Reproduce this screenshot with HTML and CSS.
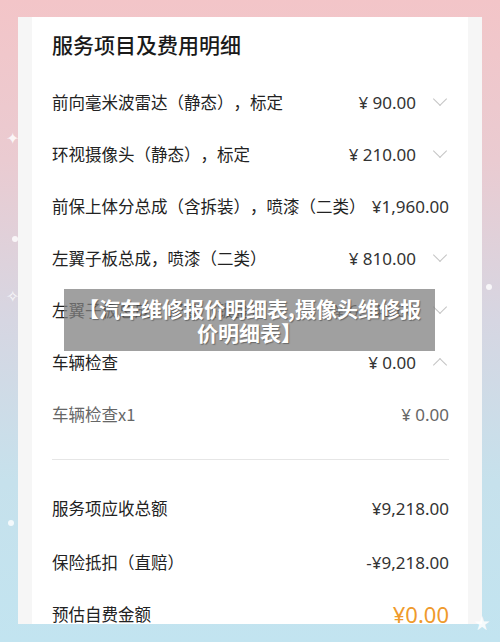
FILE: index.html
```html
<!DOCTYPE html>
<html lang="zh">
<head>
    <meta charset="UTF-8">
    <meta name="viewport" content="width=device-width, initial-scale=1.0">
    <title>服务项目及费用明细</title>
    <link rel="stylesheet" href="styles.css">
</head>
<body>
    <span class="dot" style="left:12px;top:236px"></span>
    <span class="dot" style="left:8px;top:520px"></span>
    <span class="dot" style="left:486px;top:284px"></span>
    <span class="star" style="left:6px;top:130px">✦</span>
    <span class="star" style="left:474px;top:615px">★</span>
    <span class="star" style="left:6px;top:288px">✧</span>

    <div class="frame">
        <div class="card">
            <div class="title">服务项目及费用明细</div>

            <div class="row">
                <span class="label">前向毫米波雷达（静态），标定</span>
                <span class="price">¥ 90.00<i class="chev"></i></span>
            </div>
            <div class="row">
                <span class="label">环视摄像头（静态），标定</span>
                <span class="price">¥ 210.00<i class="chev"></i></span>
            </div>
            <div class="row">
                <span class="label">前保上体分总成（含拆装），喷漆（二类）</span>
                <span class="price">¥1,960.00</span>
            </div>
            <div class="row">
                <span class="label">左翼子板总成，喷漆（二类）</span>
                <span class="price">¥ 810.00<i class="chev"></i></span>
            </div>
            <div class="row">
                <span class="label">左翼子板总成，修复（钣金）</span>
                <span class="price">¥ 6,148.00<i class="chev"></i></span>
            </div>
            <div class="row">
                <span class="label">车辆检查</span>
                <span class="price">¥ 0.00<i class="chev up"></i></span>
            </div>
            <div class="row sub">
                <span class="label">车辆检查x1</span>
                <span class="price">¥ 0.00</span>
            </div>

            <div class="divider"></div>

            <div class="row total">
                <span class="label">服务项应收总额</span>
                <span class="price">¥9,218.00</span>
            </div>
            <div class="row total">
                <span class="label">保险抵扣（直赔）</span>
                <span class="price">-¥9,218.00</span>
            </div>
            <div class="row total">
                <span class="label">预估自费金额</span>
                <span class="price pay">¥0.00</span>
            </div>
        </div>
    </div>

    <div class="banner">【汽车维修报价明细表,摄像头维修报价明细表】</div>
</body>
</html>
```

FILE: styles.css
```css
body {
    margin: 0;
    height: 642px;
    overflow: hidden;
    position: relative;
    font-family: "Noto Sans", "Noto Sans CJK SC", sans-serif;
    text-spacing-trim: space-all;
    background: linear-gradient(180deg, #f3c5c8 0%, #eacbd1 25%, #d6d6e2 50%, #c6e1ec 75%, #c2e4f0 100%);
}
.dot {
    position: absolute;
    width: 6px;
    height: 6px;
    border-radius: 50%;
    background: rgba(255,255,255,0.8);
}
.star {
    position: absolute;
    color: rgba(255,255,255,0.85);
    font-size: 16px;
    line-height: 1;
}
.frame {
    margin: 17px 18px 0;
    height: 607px;
    padding: 0 14px;
    background: #f6f6f6;
    overflow: hidden;
}
.card {
    height: 100%;
    background: #fff;
    padding: 0 19px 0 20px;
}
.title {
    height: 59px;
    padding-bottom: 5px;
    box-sizing: border-box;
    display: flex;
    align-items: center;
    font-family: "Noto Sans CJK SC", sans-serif;
    font-size: 21px;
    font-weight: 500;
    color: #1a1a1a;
}
.row {
    height: 52px;
    display: flex;
    align-items: center;
    justify-content: space-between;
    color: #222;
}
.label {
    font-family: "Noto Sans CJK SC", sans-serif;
    font-size: 16.5px;
    white-space: nowrap;
}
.price {
    display: flex;
    align-items: center;
    font-size: 17px;
    color: #333;
    white-space: nowrap;
}
.chev {
    display: inline-block;
    width: 9px;
    height: 9px;
    margin: -6px 4px 0 19px;
    border-right: 1.3px solid #c4c4c4;
    border-bottom: 1.3px solid #c4c4c4;
    transform: rotate(45deg);
}
.chev.up {
    margin-top: 6px;
    transform: rotate(-135deg);
}
.sub .label,
.sub .price {
    color: #666;
}
.divider {
    height: 1px;
    margin: 19px 0 22px;
    background: #e6e6e6;
}
.total:last-child {
    height: 48px;
}
.total + .total {
    margin-top: 2px;
}
.pay {
    font-size: 22px;
    color: #ef9a2c;
}
.banner {
    position: absolute;
    left: 64px;
    top: 289px;
    width: 371px;
    height: 62px;
    padding: 7px 14px;
    box-sizing: border-box;
    background: rgba(128,128,128,0.75);
    color: #fff;
    font-family: "Noto Sans CJK SC", sans-serif;
    font-weight: 700;
    font-size: 21px;
    line-height: 24px;
    text-align: center;
    text-shadow: 1px 1px 1px rgba(0,0,0,0.35);
}
```
